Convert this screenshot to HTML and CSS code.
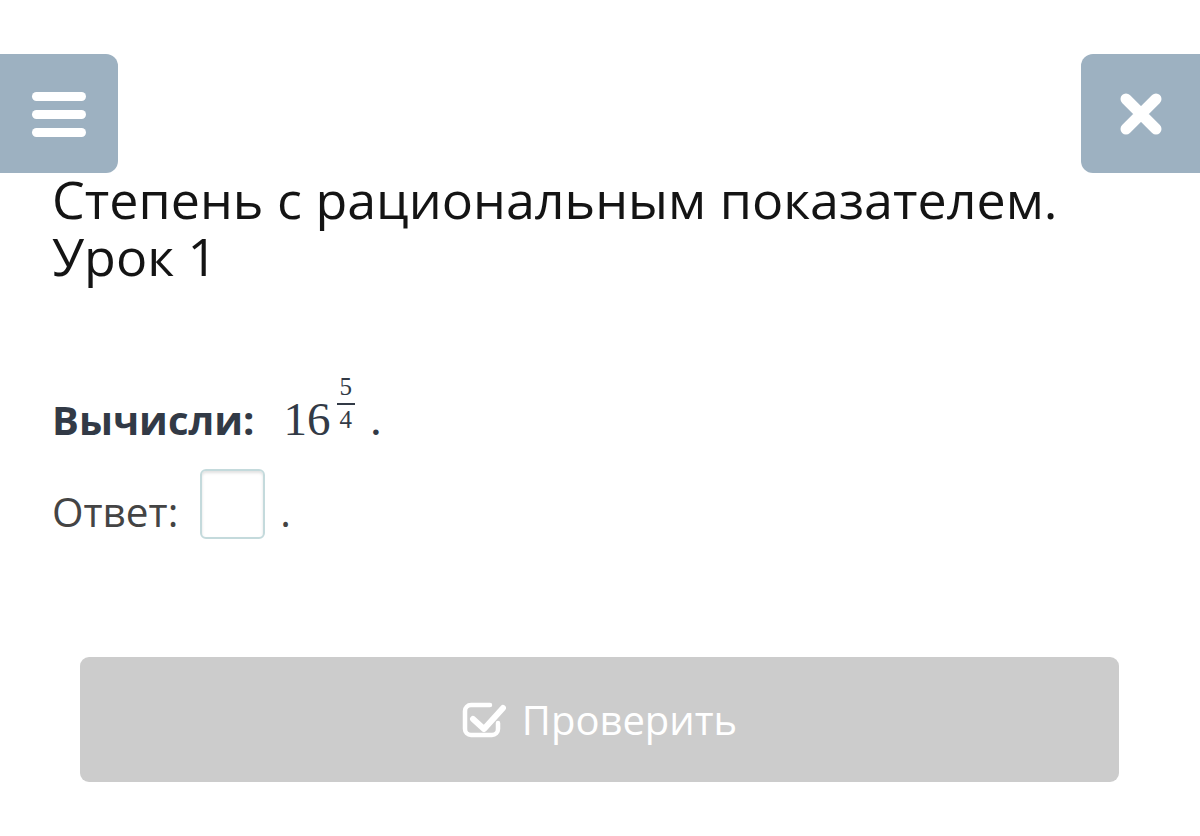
FILE: index.html
```html
<!DOCTYPE html>
<html lang="ru">
<head>
  <meta charset="UTF-8" />
  <meta name="viewport" content="width=device-width, initial-scale=1.0" />
  <title>Степень с рациональным показателем</title>
  <link rel="stylesheet" href="styles.css">
</head>
<body>
  <header class="topbar">
    <button class="nav-btn menu-btn" aria-label="Меню">
      <svg width="56" height="46" viewBox="0 0 56 46">
        <rect x="1" y="1" width="54" height="9" rx="4.5" fill="#fff"/>
        <rect x="1" y="19" width="54" height="9" rx="4.5" fill="#fff"/>
        <rect x="1" y="37" width="54" height="9" rx="4.5" fill="#fff"/>
      </svg>
    </button>
    <button class="nav-btn close-btn" aria-label="Закрыть">
      <svg width="46" height="46" viewBox="0 0 46 46">
        <path d="M8 8 L38 38 M38 8 L8 38" stroke="#fff" stroke-width="11" stroke-linecap="round"/>
      </svg>
    </button>
  </header>

  <main class="lesson">
    <h1 class="lesson-title">Степень с рациональным показателем. Урок 1</h1>

    <div class="task">
      <span class="task-label">Вычисли:</span>
      <span class="math">
        <span class="base">16</span><span class="frac"><span class="num">5</span><span class="den">4</span></span><span class="dot">.</span>
      </span>
    </div>

    <div class="answer">
      <span class="answer-label">Ответ:</span>
      <input class="answer-input" type="text" />
      <span class="answer-dot">.</span>
    </div>

    <button class="check-btn" disabled>
      <svg width="44" height="36" viewBox="0 0 44 36">
        <path d="M28 3 H9 a6 6 0 0 0 -6 6 V27 a6 6 0 0 0 6 6 H30 a6 6 0 0 0 6 -6 V21" fill="none" stroke="#fff" stroke-width="4.5" stroke-linecap="round"/>
        <path d="M11 17 L22 27 L41 6" fill="none" stroke="#fff" stroke-width="6" stroke-linecap="round" stroke-linejoin="round"/>
      </svg>
      <span>Проверить</span>
    </button>
  </main>
</body>
</html>
```

FILE: styles.css
```css
:root {
  --nav-gray: #9db1c1;
  --title: #141414;
  --label: #323a46;
  --muted: #444444;
  --btn-gray: #cccccc;
  --input-border: #c4dadc;
}

body {
  margin: 0;
  font-family: 'Open Sans', 'Noto Sans', sans-serif;
  background-color: #ffffff;
  color: var(--title);
}

.topbar {
  display: flex;
  justify-content: space-between;
  margin-top: 54px;
}

.nav-btn {
  width: 119px;
  height: 119px;
  border: none;
  padding: 0;
  background-color: var(--nav-gray);
  display: flex;
  align-items: center;
  justify-content: center;
}

.menu-btn {
  border-radius: 0 12px 12px 0;
  width: 118px;
}

.close-btn {
  border-radius: 12px 0 0 12px;
}

.lesson {
  padding: 0 52px;
}

.lesson-title {
  margin: -3px 0 0;
  font-size: 52px;
  font-weight: 400;
  line-height: 57px;
}

.task {
  margin-top: 108px;
  height: 64px;
  display: flex;
  align-items: baseline;
}

.task-label {
  font-size: 40px;
  font-weight: 700;
  color: var(--label);
}

.math {
  margin-left: 29px;
  font-family: 'Liberation Serif', 'DejaVu Serif', serif;
  color: var(--label);
  display: inline-flex;
  align-items: baseline;
}

.base {
  font-size: 47px;
}

.frac {
  display: inline-flex;
  flex-direction: column;
  align-items: center;
  font-size: 25px;
  line-height: 20px;
  margin-left: 6px;
  position: relative;
  top: -40px;
}

.num {
  border-bottom: 2px solid var(--label);
  padding: 0 3px 6px;
}

.den {
  padding-top: 5px;
}

.dot {
  font-size: 47px;
  margin-left: 15px;
}

.answer {
  margin-top: 13px;
  display: flex;
  align-items: flex-end;
}

.answer-label,
.answer-dot {
  font-size: 40.5px;
  color: var(--muted);
}

.answer-input {
  width: 65px;
  height: 70px;
  box-sizing: border-box;
  margin-left: 22px;
  border: 2px solid var(--input-border);
  border-radius: 6px;
  box-shadow: inset 0 2px 3px rgba(0, 0, 0, 0.12);
  background: #fff;
}

.answer-dot {
  margin-left: 15px;
}

.check-btn {
  margin: 118px 0 0 28px;
  width: 1039px;
  height: 125px;
  border: none;
  border-radius: 9px;
  background-color: var(--btn-gray);
  color: #ffffff;
  font-family: 'Open Sans', 'Noto Sans', sans-serif;
  font-size: 40px;
  display: flex;
  align-items: center;
  justify-content: center;
  gap: 16px;
  padding: 0;
}
```
